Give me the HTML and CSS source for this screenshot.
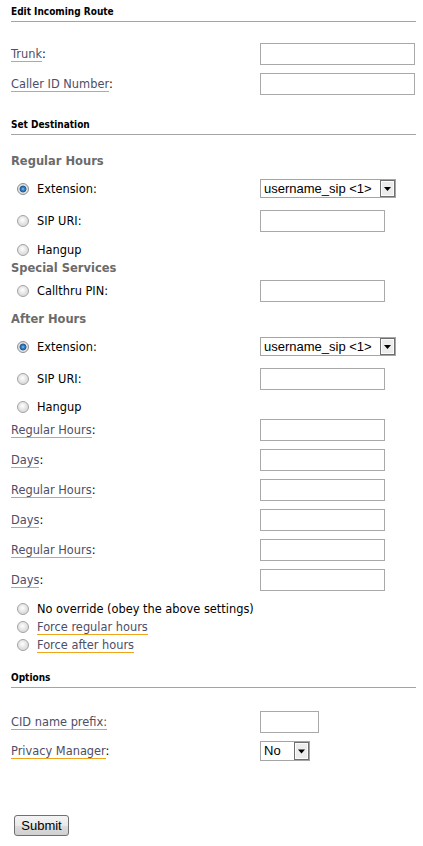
FILE: index.html
```html
<!DOCTYPE html>
<html>
<head>
<meta charset="utf-8">
<link rel="stylesheet" href="styles.css">
</head>
<body>
<form class="page">
  <h2 class="title">Edit Incoming Route</h2>
  <div class="rule"></div>

  <div class="row row--first">
    <label class="lbl"><span class="lnk">Trunk</span>:</label>
    <input class="txt txt--wide" type="text">
  </div>
  <div class="row">
    <label class="lbl"><span class="lnk">Caller ID Number</span>:</label>
    <input class="txt txt--wide" type="text">
  </div>

  <h2 class="title title--next">Set Destination</h2>
  <div class="rule"></div>

  <h3 class="sub sub--first">Regular Hours</h3>
  <div class="row row--select">
    <label class="opt"><input class="radio" type="radio" name="rh" checked><span>Extension:</span></label>
    <div class="select select--ext">
      <select><option>username_sip &lt;1&gt;</option></select>
      <svg class="arrow" width="15" height="17" viewBox="0 0 15 17"><rect x="0.5" y="0.5" width="14" height="16" fill="#ececec" stroke="#6f6f6f"/><rect x="1.5" y="1.5" width="12" height="14" fill="none" stroke="#fbfbfb"/><path d="M4 7h7l-3.5 4z" fill="#000"/></svg>
    </div>
  </div>
  <div class="row row--after-select">
    <label class="opt"><input class="radio" type="radio" name="rh"><span>SIP URI:</span></label>
    <input class="txt" type="text">
  </div>
  <div class="row row--radio">
    <label class="opt"><input class="radio" type="radio" name="rh"><span>Hangup</span></label>
  </div>

  <h3 class="sub">Special Services</h3>
  <div class="row row--after-sub">
    <label class="opt"><input class="radio" type="radio" name="rh"><span>Callthru PIN:</span></label>
    <input class="txt" type="text">
  </div>

  <h3 class="sub sub--spaced">After Hours</h3>
  <div class="row row--select">
    <label class="opt"><input class="radio" type="radio" name="ah" checked><span>Extension:</span></label>
    <div class="select select--ext">
      <select><option>username_sip &lt;1&gt;</option></select>
      <svg class="arrow" width="15" height="17" viewBox="0 0 15 17"><rect x="0.5" y="0.5" width="14" height="16" fill="#ececec" stroke="#6f6f6f"/><rect x="1.5" y="1.5" width="12" height="14" fill="none" stroke="#fbfbfb"/><path d="M4 7h7l-3.5 4z" fill="#000"/></svg>
    </div>
  </div>
  <div class="row row--after-select">
    <label class="opt"><input class="radio" type="radio" name="ah"><span>SIP URI:</span></label>
    <input class="txt" type="text">
  </div>
  <div class="row row--radio row--radio-tight">
    <label class="opt"><input class="radio" type="radio" name="ah"><span>Hangup</span></label>
  </div>

  <div class="row row--after-sub">
    <label class="lbl"><span class="lnk">Regular Hours</span>:</label>
    <input class="txt" type="text">
  </div>
  <div class="row">
    <label class="lbl"><span class="lnk">Days</span>:</label>
    <input class="txt" type="text">
  </div>
  <div class="row">
    <label class="lbl"><span class="lnk">Regular Hours</span>:</label>
    <input class="txt" type="text">
  </div>
  <div class="row">
    <label class="lbl"><span class="lnk">Days</span>:</label>
    <input class="txt" type="text">
  </div>
  <div class="row">
    <label class="lbl"><span class="lnk">Regular Hours</span>:</label>
    <input class="txt" type="text">
  </div>
  <div class="row">
    <label class="lbl"><span class="lnk">Days</span>:</label>
    <input class="txt" type="text">
  </div>

  <div class="overrides">
    <label class="opt opt--line"><input class="radio" type="radio" name="ov"><span>No override (obey the above settings)</span></label>
    <label class="opt opt--line"><input class="radio" type="radio" name="ov"><span class="lnk">Force regular hours</span></label>
    <label class="opt opt--line"><input class="radio" type="radio" name="ov"><span class="lnk">Force after hours</span></label>
  </div>

  <h2 class="title title--options">Options</h2>
  <div class="rule"></div>

  <div class="row row--first row--first-options">
    <label class="lbl"><span class="lnk">CID name prefix:</span></label>
    <input class="txt txt--short" type="text">
  </div>
  <div class="row row--select-plain">
    <label class="lbl"><span class="lnk">Privacy Manager</span>:</label>
    <div class="select select--small">
      <select><option>No</option></select>
      <svg class="arrow" width="15" height="18" viewBox="0 0 15 18"><rect x="0.5" y="0.5" width="14" height="17" fill="#ececec" stroke="#6f6f6f"/><rect x="1.5" y="1.5" width="12" height="15" fill="none" stroke="#fbfbfb"/><path d="M4 7.5h7l-3.5 4z" fill="#000"/></svg>
    </div>
  </div>

  <div class="actions">
    <button class="btn" type="button">Submit</button>
  </div>
</form>
</body>
</html>
```

FILE: styles.css
```css
html, body {
  margin: 0;
  padding: 0;
  background: #ffffff;
}

body {
  font-family: "DejaVu Sans", Verdana, sans-serif;
  font-size: 11.4px;
  color: #000;
}

.page {
  padding: 1px 7px 0 11px;
  width: 405px;
}

.title {
  margin: 0;
  height: 20px;
  line-height: 21px;
  font-family: "DejaVu Sans Condensed", "DejaVu Sans", sans-serif;
  font-stretch: condensed;
  font-weight: bold;
  font-size: 10px;
  color: #000;
}

.title--next {
  margin-top: 19px;
}

.title--options {
  margin-top: 13px;
}

.rule {
  height: 1px;
  background: #a4a4a4;
  margin-bottom: 1px;
}

.sub {
  margin: 0;
  height: 18px;
  line-height: 19px;
  font-family: "DejaVu Sans", sans-serif;
  font-weight: bold;
  font-size: 11.5px;
  color: #6b6b6b;
}

.sub--first {
  margin-top: 17px;
}

.sub--spaced {
  margin-top: 8px;
}

.row {
  display: flex;
  align-items: center;
  height: 22px;
  margin-top: 8px;
}

.row--first {
  margin-top: 21px;
}

.row--first-options {
  margin-top: 23px;
}

.row--select {
  height: 19px;
  margin-top: 9px;
}

.row--select-plain {
  height: 19px;
  margin-top: 8px;
}

.row--after-select {
  margin-top: 12px;
}

.row--radio {
  height: 18px;
  margin-top: 9px;
}

.row--radio-tight {
  margin-top: 8px;
}

.row--after-sub {
  margin-top: 3px;
}

.lbl {
  flex: none;
  width: 249px;
  color: #000;
}

.lnk {
  color: #4e4e66;
  border-bottom: 1px solid #f0a41c;
}

.opt {
  flex: none;
  width: 249px;
  display: flex;
  align-items: center;
  color: #000;
}

.opt span {
  margin-left: 8px;
}

.opt .lnk {
  color: #4e4e66;
}

.opt--line {
  height: 18px;
}

.radio {
  -webkit-appearance: none;
  appearance: none;
  box-sizing: border-box;
  width: 12px;
  height: 12px;
  margin: 0 0 0 6px;
  border-radius: 50%;
  border: 1px solid #a3a3a3;
  background: radial-gradient(circle at 45% 40%, #ffffff 0, #e6e6e6 45%, #cfcfcf 100%);
  flex: none;
}

.radio:checked {
  border-color: #8e8e8e;
  background: radial-gradient(circle at 50% 50%, #8fc5ee 0, #3a82c8 1.5px, #1f5a98 3px, #dcdcdc 3.8px, #f2f2f2 100%);
}

.txt {
  box-sizing: border-box;
  width: 125px;
  height: 22px;
  margin: 0;
  padding: 1px 3px;
  border: 1px solid #a9a9a9;
  background: #fff;
  font: 13px "Liberation Sans", Arial, sans-serif;
}

.txt--wide {
  width: 155px;
}

.txt--short {
  width: 59px;
}

.select {
  position: relative;
  box-sizing: border-box;
  height: 19px;
}

.select--ext {
  width: 136px;
}

.select--small {
  width: 50px;
  height: 20px;
}

.select select {
  -webkit-appearance: none;
  appearance: none;
  box-sizing: border-box;
  width: 100%;
  height: 100%;
  margin: 0;
  padding: 0 0 0 3px;
  border: 1px solid #a5a5a5;
  border-radius: 0;
  background: #fff;
  color: #000;
  font: 13px "Liberation Sans", Arial, sans-serif;
  line-height: 17px;
}

.select .arrow {
  position: absolute;
  top: 1px;
  right: 1px;
  pointer-events: none;
}

.overrides {
  margin-top: 9px;
  display: flex;
  flex-direction: column;
}

.actions {
  margin-top: 55px;
  padding-left: 3px;
}

.btn {
  box-sizing: border-box;
  height: 21px;
  width: 55px;
  margin: 0;
  padding: 0;
  border: 1px solid #707070;
  border-radius: 3px;
  background: linear-gradient(#f4f4f4, #e9e9e9 50%, #dcdcdc 51%, #d0d0d0);
  font: 13px "Liberation Sans", Arial, sans-serif;
  color: #000;
}
```
